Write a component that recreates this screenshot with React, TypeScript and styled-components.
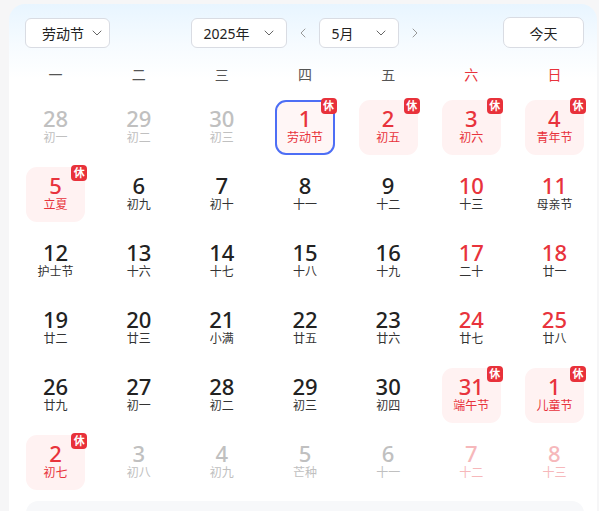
import styled, { createGlobalStyle, css } from 'styled-components'
import { ChevronDown, ChevronLeft, ChevronRight } from 'lucide-react'

const GlobalStyle = createGlobalStyle`
    html, body {
        margin: 0;
        padding: 0;
        background: #f6f6f7;
        overflow: hidden;
    }
    body {
        padding: 4px 0 0 9px;
        font-family: "Noto Sans", "Noto Sans CJK SC", sans-serif;
        color: #222;
    }
`

type Day = {
    num: number
    lunar: string
    other?: boolean
    rest?: boolean
    selected?: boolean
}

const weeks: Day[][] = [
    [
        { num: 28, lunar: '初一', other: true },
        { num: 29, lunar: '初二', other: true },
        { num: 30, lunar: '初三', other: true },
        { num: 1, lunar: '劳动节', rest: true, selected: true },
        { num: 2, lunar: '初五', rest: true },
        { num: 3, lunar: '初六', rest: true },
        { num: 4, lunar: '青年节', rest: true },
    ],
    [
        { num: 5, lunar: '立夏', rest: true },
        { num: 6, lunar: '初九' },
        { num: 7, lunar: '初十' },
        { num: 8, lunar: '十一' },
        { num: 9, lunar: '十二' },
        { num: 10, lunar: '十三' },
        { num: 11, lunar: '母亲节' },
    ],
    [
        { num: 12, lunar: '护士节' },
        { num: 13, lunar: '十六' },
        { num: 14, lunar: '十七' },
        { num: 15, lunar: '十八' },
        { num: 16, lunar: '十九' },
        { num: 17, lunar: '二十' },
        { num: 18, lunar: '廿一' },
    ],
    [
        { num: 19, lunar: '廿二' },
        { num: 20, lunar: '廿三' },
        { num: 21, lunar: '小满' },
        { num: 22, lunar: '廿五' },
        { num: 23, lunar: '廿六' },
        { num: 24, lunar: '廿七' },
        { num: 25, lunar: '廿八' },
    ],
    [
        { num: 26, lunar: '廿九' },
        { num: 27, lunar: '初一' },
        { num: 28, lunar: '初二' },
        { num: 29, lunar: '初三' },
        { num: 30, lunar: '初四' },
        { num: 31, lunar: '端午节', rest: true },
        { num: 1, lunar: '儿童节', rest: true },
    ],
    [
        { num: 2, lunar: '初七', rest: true },
        { num: 3, lunar: '初八', other: true },
        { num: 4, lunar: '初九', other: true },
        { num: 5, lunar: '芒种', other: true },
        { num: 6, lunar: '十一', other: true },
        { num: 7, lunar: '十二', other: true },
        { num: 8, lunar: '十三', other: true },
    ],
]

const weekdays = ['一', '二', '三', '四', '五', '六', '日']

export default function App() {
    return (
        <>
            <GlobalStyle />
            <Card>
                <Toolbar>
                    <Select width={85}>
                        <span>劳动节</span>
                        <ChevronDown size={16} strokeWidth={1.5} color="#666" />
                    </Select>
                    <Middle>
                        <Select width={96} spread>
                            <span>2025年</span>
                            <ChevronDown size={16} strokeWidth={1.5} color="#666" />
                        </Select>
                        <Arrow><ChevronLeft size={16} strokeWidth={1.5} /></Arrow>
                        <Select width={80} spread>
                            <span>5月</span>
                            <ChevronDown size={16} strokeWidth={1.5} color="#666" />
                        </Select>
                        <Arrow><ChevronRight size={16} strokeWidth={1.5} /></Arrow>
                    </Middle>
                    <TodayButton>今天</TodayButton>
                </Toolbar>

                <Weekdays>
                    {weekdays.map((w, i) => (
                        <Weekday key={w} weekend={i >= 5}>{w}</Weekday>
                    ))}
                </Weekdays>

                <Grid>
                    {weeks.flat().map((d, i) => {
                        const weekend = i % 7 >= 5
                        return (
                            <Cell key={i} rest={d.rest} selected={d.selected}>
                                <Num other={d.other} weekend={weekend} rest={d.rest}>{d.num}</Num>
                                <Lunar other={d.other} weekend={weekend} rest={d.rest}>{d.lunar}</Lunar>
                                {d.rest && <Badge>休</Badge>}
                            </Cell>
                        )
                    })}
                </Grid>

                <Footer />
            </Card>
        </>
    )
}

const Card = styled.div`
    width: 588px;
    box-sizing: border-box;
    padding: 13px 13px 0 16px;
    border-radius: 16px 16px 0 0;
    background: linear-gradient(180deg, #e8f5ff 0, #f6fbff 40px, #ffffff 75px);
    height: 520px;
`

const Toolbar = styled.div`
    display: flex;
    align-items: center;
    justify-content: space-between;
    height: 31px;
`

const Middle = styled.div`
    display: flex;
    align-items: center;
    gap: 8px;
`

const Select = styled.div<{ width: number, spread?: boolean }>`
    display: flex;
    align-items: center;
    box-sizing: border-box;
    width: ${({ width }) => width}px;
    height: 30px;
    gap: 5px;
    padding: ${({ spread }) => (spread ? '0 9px 0 12px' : '0 0 0 16px')};
    justify-content: ${({ spread }) => (spread ? 'space-between' : 'flex-start')};
    border: 1px solid #d9dce3;
    border-radius: 6px;
    background: #fff;
    font-size: 14px;
    color: #222;
`

const Arrow = styled.div`
    display: flex;
    width: 16px;
    color: #999;
`

const TodayButton = styled.div`
    display: flex;
    align-items: center;
    justify-content: center;
    box-sizing: border-box;
    width: 81px;
    height: 31px;
    border: 1px solid #d9dce3;
    border-radius: 7px;
    background: #fff;
    font-size: 14px;
    color: #222;
`

const Weekdays = styled.div`
    display: grid;
    grid-template-columns: repeat(7, 1fr);
    column-gap: 24px;
    margin: 13px 0 0 1px;
    height: 28px;
    align-items: center;
`

const Weekday = styled.div<{ weekend?: boolean }>`
    text-align: center;
    font-size: 14px;
    line-height: 18px;
    color: ${({ weekend }) => (weekend ? '#e8333c' : '#555')};
`

const Grid = styled.div`
    display: grid;
    grid-template-columns: repeat(7, 1fr);
    grid-auto-rows: 55px;
    column-gap: 24px;
    row-gap: 12px;
    margin: 11px 0 0 1px;
`

const Cell = styled.div<{ rest?: boolean, selected?: boolean }>`
    position: relative;
    display: flex;
    flex-direction: column;
    align-items: center;
    justify-content: center;
    gap: 2px;
    padding-bottom: 4px;
    box-sizing: border-box;
    border: 2px solid transparent;
    border-radius: 11px;
    ${({ rest }) => rest && css`background: #fff2f2;`}
    ${({ selected }) => selected && css`
        border-color: #4d6ef5;
        background: #fff6f6;
    `}
`

const textColor = (p: { other?: boolean, weekend?: boolean, rest?: boolean }, lunar: boolean) => {
    if (p.rest) return '#e8333c'
    if (p.other) return p.weekend ? '#f6b8bb' : '#c0c0c0'
    if (p.weekend && !lunar) return '#e8333c'
    return lunar ? '#333' : '#222'
}

const Num = styled.div<{ other?: boolean, weekend?: boolean, rest?: boolean }>`
    font-size: 22px;
    line-height: 22px;
    font-weight: 500;
    color: ${(p) => textColor(p, false)};
`

const Lunar = styled.div<{ other?: boolean, weekend?: boolean, rest?: boolean }>`
    font-size: 12px;
    line-height: 14px;
    color: ${(p) => textColor(p, true)};
`

const Badge = styled.div`
    position: absolute;
    top: -4px;
    right: -4px;
    width: 16px;
    height: 16px;
    display: flex;
    align-items: center;
    justify-content: center;
    border-radius: 4px;
    background: #e8313a;
    color: #fff;
    font-size: 11px;
    line-height: 16px;
    font-weight: 600;
`

const Footer = styled.div`
    margin: 11px 0 0 1px;
    height: 60px;
    border-radius: 12px;
    background: #f7f8fa;
`
